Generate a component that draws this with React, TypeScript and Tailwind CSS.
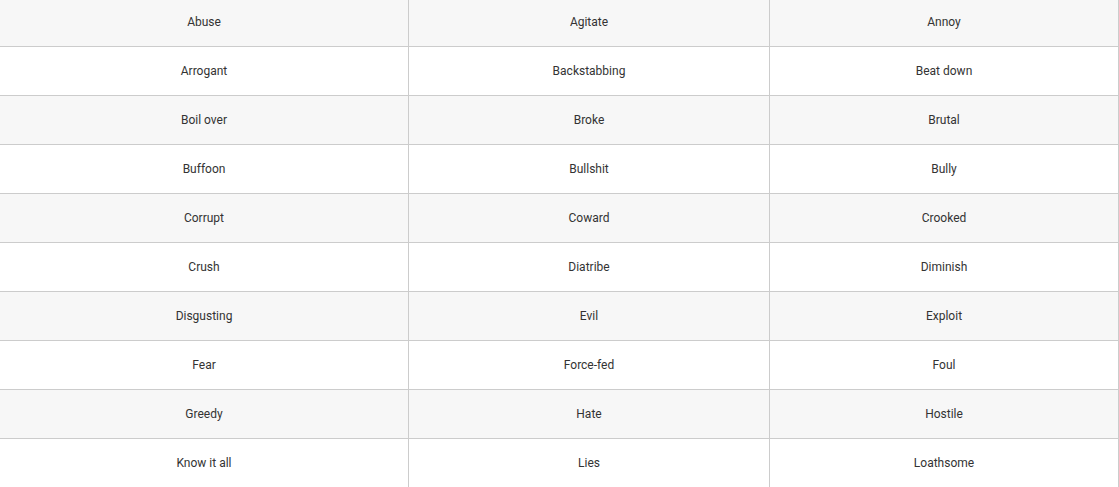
import React from "react";

const rows: [string, string, string][] = [
  ["Abuse", "Agitate", "Annoy"],
  ["Arrogant", "Backstabbing", "Beat down"],
  ["Boil over", "Broke", "Brutal"],
  ["Buffoon", "Bullshit", "Bully"],
  ["Corrupt", "Coward", "Crooked"],
  ["Crush", "Diatribe", "Diminish"],
  ["Disgusting", "Evil", "Exploit"],
  ["Fear", "Force-fed", "Foul"],
  ["Greedy", "Hate", "Hostile"],
  ["Know it all", "Lies", "Loathsome"],
];

export default function App() {
  return (
    <div
      className="w-[1119px] h-[487px] overflow-hidden bg-white text-[12px] text-[#333]"
      style={{ fontFamily: "Roboto, 'Liberation Sans', sans-serif" }}
    >
      <div className="-mt-[2px] flex flex-col">
        {rows.map((r, i) => (
          <div
            key={i}
            className={`flex h-[49px] border-b border-[#cccccc] ${i % 2 === 0 ? "bg-[#f7f7f7]" : "bg-white"}`}
          >
            <div className="w-[409px] flex items-center justify-center border-r border-[#cccccc]">{r[0]}</div>
            <div className="w-[361px] flex items-center justify-center border-r border-[#cccccc]">{r[1]}</div>
            <div className="w-[349px] flex items-center justify-center border-r border-[#cccccc]">{r[2]}</div>
          </div>
        ))}
      </div>
    </div>
  );
}
